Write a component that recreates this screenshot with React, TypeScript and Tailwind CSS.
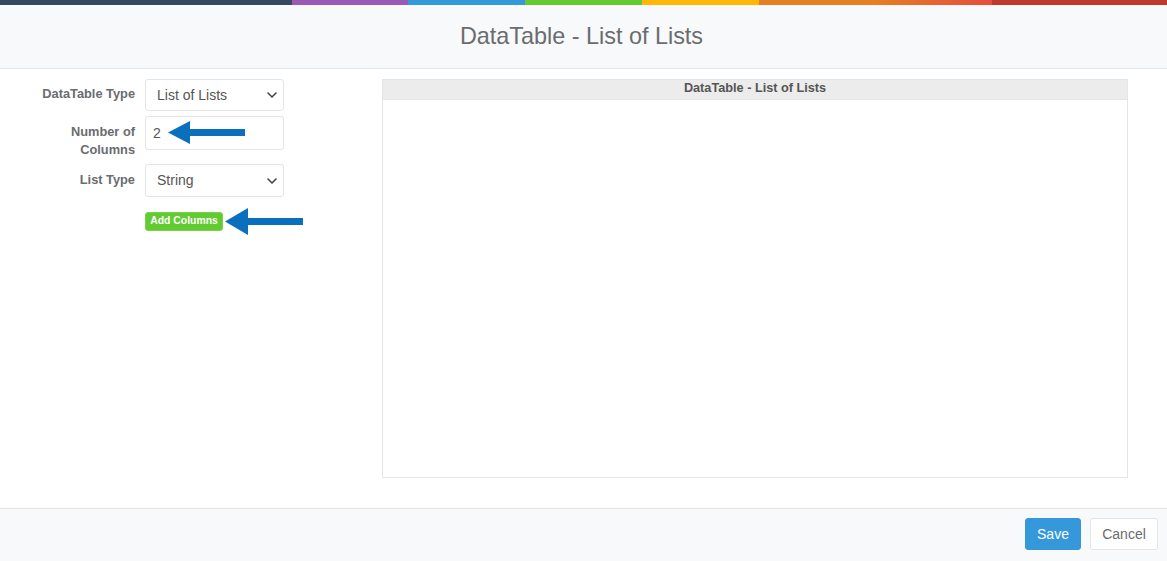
import React from "react";

function Chevron() {
  return (
    <svg width="12" height="8" viewBox="0 0 12 8" className="absolute right-[5px] top-1/2 -translate-y-1/2">
      <path d="M2 2 L6 6 L10 2" fill="none" stroke="#444" strokeWidth="1.6" strokeLinecap="round" strokeLinejoin="round" />
    </svg>
  );
}

function Arrow({ w, h, head, thick }: { w: number; h: number; head: number; thick: number }) {
  const c = h / 2;
  return (
    <svg width={w} height={h} viewBox={`0 0 ${w} ${h}`}>
      <polygon points={`0,${c} ${head},0 ${head},${h}`} fill="#0a6fbd" />
      <rect x={head - 1} y={c - thick / 2} width={w - head + 1} height={thick} fill="#0a6fbd" />
    </svg>
  );
}

export default function App() {
  const font = { fontFamily: '"Liberation Sans", Arial, sans-serif' };
  return (
    <div className="w-[1167px] h-[561px] flex flex-col bg-white overflow-hidden" style={font}>
      <div className="h-[5px] w-full bg-[linear-gradient(to_right,#34495e,#34495e_25%,#9b59b6_25%,#9b59b6_35%,#3498db_35%,#3498db_45%,#62cb31_45%,#62cb31_55%,#ffb606_55%,#ffb606_65%,#e67e22_65%,#e67e22_75%,#e74c3c_85%,#c0392b_85%,#c0392b_100%)]" />
      <div className="h-[64px] bg-[#f7f9fa] border-b border-[#e4e5e7] flex items-center justify-center pr-[4px]">
        <h1 className="text-[23.4px] text-[#6a6c6f] font-light pt-[1px]">DataTable - List of Lists</h1>
      </div>
      <div className="h-[439px] flex pt-[10px]">
        <div className="w-[382px] shrink-0 flex flex-col">
          <div className="flex items-start">
            <label className="w-[135px] text-right text-[12.8px] font-bold text-[#6a6c6f] leading-[18px] pt-[6px]">DataTable Type</label>
            <div className="relative ml-[10px] w-[139px] h-[32px] border border-[#e4e5e7] rounded-[3px] bg-white flex items-center pl-[11px] text-[14px] text-[#555]">
              List of Lists
              <Chevron />
            </div>
          </div>
          <div className="flex items-start mt-[5px] relative">
            <label className="w-[135px] text-right text-[12.8px] font-bold text-[#6a6c6f] leading-[18px] pt-[7px] pl-[60px]">Number of Columns</label>
            <div className="ml-[10px] w-[139px] h-[34px] border border-[#e4e5e7] rounded-[3px] bg-white flex items-center pl-[7px] text-[14px] text-[#555]">
              2
            </div>
            <div className="absolute left-[168px] top-[5px]">
              <Arrow w={77} h={23} head={22} thick={7} />
            </div>
          </div>
          <div className="flex items-start mt-[5px]">
            <label className="w-[135px] text-right text-[12.8px] font-bold text-[#6a6c6f] leading-[18px] pt-[7px]">List Type</label>
            <div className="relative ml-[10px] w-[139px] h-[33px] border border-[#e4e5e7] rounded-[3px] bg-white flex items-center pl-[11px] text-[14px] text-[#555]">
              String
              <Chevron />
            </div>
          </div>
          <div className="flex items-center mt-[11px] pl-[145px]">
            <button className="h-[19px] w-[78px] bg-[#62cb31] border border-[#74d348] rounded-[3px] text-white text-[10.4px] font-bold leading-none flex items-center justify-center">
              Add Columns
            </button>
            <div className="ml-[2px]">
              <Arrow w={78} h={27} head={23} thick={7} />
            </div>
          </div>
        </div>
        <div className="flex-1 mr-[39px] h-[399px] border border-[#e4e5e7] flex flex-col">
          <div className="h-[20px] bg-[#ececec] border-b border-[#e4e5e7] flex items-center justify-center text-[12.7px] font-bold text-[#555] pb-[1px]">
            DataTable - List of Lists
          </div>
          <div className="flex-1 bg-white" />
        </div>
      </div>
      <div className="flex-1 bg-[#f7f9fa] border-t border-[#e4e5e7] flex justify-end items-start pt-[9px] pr-[9px] gap-[9px]">
        <button className="h-[32px] w-[56px] bg-[#3498db] border border-[#3498db] rounded-[3px] text-white text-[14px]">Save</button>
        <button className="h-[32px] w-[68px] bg-white border border-[#e4e5e7] rounded-[3px] text-[#6a6c6f] text-[14px]">Cancel</button>
      </div>
    </div>
  );
}
